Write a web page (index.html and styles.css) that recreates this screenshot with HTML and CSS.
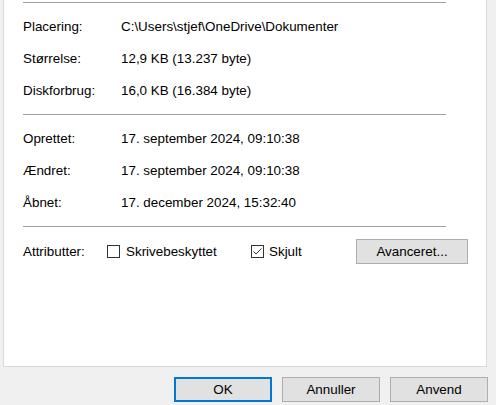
FILE: index.html
```html
<!DOCTYPE html>
<html lang="da">
<head>
<meta charset="utf-8">
<title>Egenskaber</title>
<link rel="stylesheet" href="styles.css">
</head>
<body>
<div class="dialog">
  <div class="panel">
    <div class="sep"></div>
    <div class="group">
      <div class="row"><span class="label">Placering:</span><span class="value">C:\Users\stjef\OneDrive\Dokumenter</span></div>
      <div class="row"><span class="label">Størrelse:</span><span class="value">12,9 KB (13.237 byte)</span></div>
      <div class="row"><span class="label">Diskforbrug:</span><span class="value">16,0 KB (16.384 byte)</span></div>
    </div>
    <div class="sep"></div>
    <div class="group">
      <div class="row"><span class="label">Oprettet:</span><span class="value">17. september 2024, 09:10:38</span></div>
      <div class="row"><span class="label">Ændret:</span><span class="value">17. september 2024, 09:10:38</span></div>
      <div class="row"><span class="label">Åbnet:</span><span class="value">17. december 2024, 15:32:40</span></div>
    </div>
    <div class="sep"></div>
    <div class="attrs">
      <span class="label">Attributter:</span>
      <label class="check check-ro"><span class="box"></span><span>Skrivebeskyttet</span></label>
      <label class="check check-hidden"><span class="box"><svg viewBox="0 0 13 13" width="13" height="13"><path d="M2.5 6.5 L5 9 L10.5 3.5" fill="none" stroke="#333" stroke-width="1"/></svg></span><span>Skjult</span></label>
      <button class="btn btn-adv">Avanceret...</button>
    </div>
  </div>
  <div class="footer">
    <button class="btn btn-ok">OK</button>
    <button class="btn">Annuller</button>
    <button class="btn">Anvend</button>
  </div>
</div>
</body>
</html>
```
FILE: styles.css
```css
html, body {
  margin: 0;
  padding: 0;
  background: #f0f0f0;
}
body {
  width: 496px;
  height: 405px;
  overflow: hidden;
  font-family: "Liberation Sans", Arial, sans-serif;
  font-size: 13.4px;
  color: #000;
}
.dialog {
  display: flex;
  flex-direction: column;
}
.panel {
  margin-left: 3px;
  width: 482px;
  height: 364px;
  background: #fff;
  border-left: 1px solid #d9d9d9;
  border-right: 1px solid #d9d9d9;
  border-bottom: 1px solid #d9d9d9;
  padding-top: 2px;
  box-sizing: content-box;
  display: flex;
  flex-direction: column;
}
.sep {
  margin-left: 19px;
  width: 423px;
  height: 1px;
  background: #a0a0a0;
}
.group {
  padding: 7px 0 8px 19px;
}
.row {
  display: flex;
  height: 32px;
  line-height: 33px;
  white-space: nowrap;
}
.label {
  width: 98px;
  flex: none;
}
.attrs {
  display: flex;
  align-items: center;
  height: 32px;
  margin-top: 8px;
  padding-left: 19px;
  white-space: nowrap;
}
.attrs .label {
  width: 84px;
}
.check {
  display: flex;
  align-items: center;
}
.box {
  width: 13px;
  height: 13px;
  box-sizing: border-box;
  border: 1px solid #333;
  background: #fff;
  margin-right: 6px;
  display: flex;
  align-items: center;
  justify-content: center;
  overflow: hidden;
}
.box svg {
  display: block;
  flex: none;
}
.check-ro {
  width: 144px;
}
.check-hidden {
  width: 105px;
}
.check-hidden .box {
  margin-right: 5px;
}
.btn {
  font-family: inherit;
  font-size: 13.4px;
  color: #000;
  background: #e1e1e1;
  border: 1px solid #adadad;
  height: 25px;
  width: 98px;
  padding: 0;
  margin: 0;
  box-sizing: border-box;
}
.btn-adv {
  width: 112px;
}
.footer {
  display: flex;
  justify-content: flex-end;
  gap: 10px;
  padding-top: 10px;
  padding-right: 8px;
}
.btn-ok {
  border: 2px solid #0078d7;
}
```
